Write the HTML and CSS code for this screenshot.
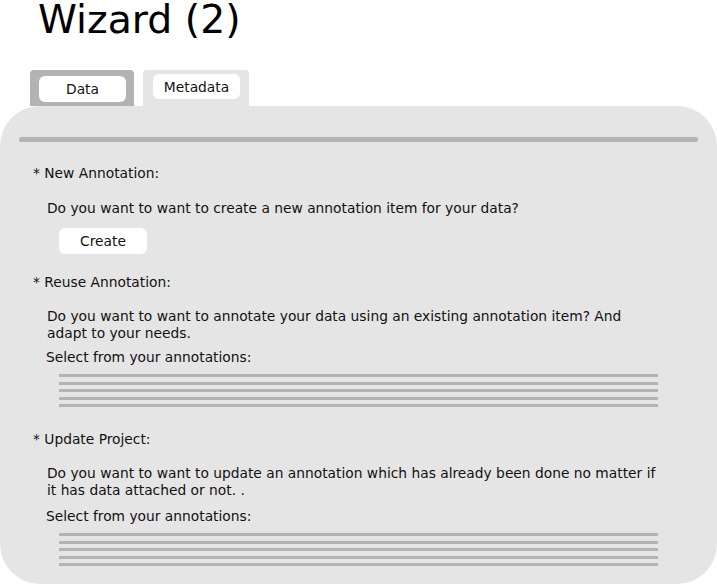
FILE: index.html
```html
<!DOCTYPE html>
<html>
<head>
<meta charset="utf-8">
<link rel="stylesheet" href="styles.css">
</head>
<body>
<h1 class="title">Wizard (2)</h1>
<div class="tabs">
  <div class="tab tab-active"><span class="tab-pill">Data</span></div>
  <div class="tab tab-idle"><span class="tab-pill">Metadata</span></div>
</div>
<div class="panel">
  <div class="separator"></div>
  <section class="group group-new">
    <div class="label">* New Annotation:</div>
    <p class="desc">Do you want to want to create a new annotation item for your data?</p>
    <button class="btn">Create</button>
  </section>
  <section class="group group-reuse">
    <div class="label">* Reuse Annotation:</div>
    <p class="desc">Do you want to want to annotate your data using an existing annotation item? And adapt to your needs.</p>
    <div class="select-label">Select from your annotations:</div>
    <div class="list">
      <div class="row"></div><div class="row"></div><div class="row"></div><div class="row"></div><div class="row"></div>
    </div>
  </section>
  <section class="group group-update">
    <div class="label">* Update Project:</div>
    <p class="desc">Do you want to want to update an annotation which has already been done no matter if it has data attached or not. .</p>
    <div class="select-label">Select from your annotations:</div>
    <div class="list">
      <div class="row"></div><div class="row"></div><div class="row"></div><div class="row"></div><div class="row"></div>
    </div>
  </section>
</div>
</body>
</html>
```
FILE: styles.css
```css
html, body {
  margin: 0;
  padding: 0;
  background: #ffffff;
}
body {
  font-family: "DejaVu Sans", sans-serif;
  color: #111111;
  width: 717px;
  height: 585px;
  overflow: hidden;
}
.title {
  margin: 0;
  padding-left: 38px;
  font-size: 39.4px;
  font-weight: normal;
  line-height: 38px;
  height: 38px;
  color: #000;
}
.tabs {
  display: flex;
  gap: 9px;
  margin-top: 32px;
  padding-left: 30px;
  height: 36px;
}
.tab {
  height: 36px;
  border-radius: 4px 4px 0 0;
  box-sizing: border-box;
}
.tab-active {
  width: 104px;
  background: #b3b3b3;
  padding: 6px 0 0 9px;
}
.tab-idle {
  width: 106px;
  background: #e5e5e5;
  padding: 4px 0 0 10px;
}
.tab-pill {
  display: flex;
  align-items: center;
  justify-content: center;
  width: 87px;
  height: 26px;
  background: #fff;
  border-radius: 6px;
  font-size: 13.8px;
}
.tab-idle .tab-pill {
  height: 25px;
}
.panel {
  background: #e5e5e5;
  height: 478px;
  border-radius: 40px;
  padding: 31px 19px 0 19px;
  box-sizing: border-box;
  font-size: 13.8px;
  line-height: 17px;
}
.separator {
  height: 5px;
  background: #b3b3b3;
  border-radius: 2px;
}
.group {
  padding-left: 14px;
}
.label {
  margin: 0;
}
.group-new {
  margin-top: 23px;
}
.group-reuse {
  margin-top: 20px;
}
.group-update {
  margin-top: 24px;
}
.desc {
  margin: 18px 0 0 14px;
  width: 614px;
}
.group-reuse .desc,
.group-update .desc {
  margin-top: 17px;
}
.btn {
  display: block;
  margin: 11px 0 0 26px;
  width: 88px;
  height: 26px;
  border: none;
  border-radius: 6px;
  background: #fff;
  font-family: "DejaVu Sans", sans-serif;
  font-size: 13.8px;
  color: #111;
  padding: 0;
}
.select-label {
  margin: 7px 0 0 13px;
}
.group-update .select-label {
  margin-top: 9px;
}
.list {
  display: flex;
  flex-direction: column;
  gap: 4.5px;
  margin: 8px 0 0 26px;
  width: 599px;
}
.row {
  height: 3px;
  background: #b3b3b3;
}
```
